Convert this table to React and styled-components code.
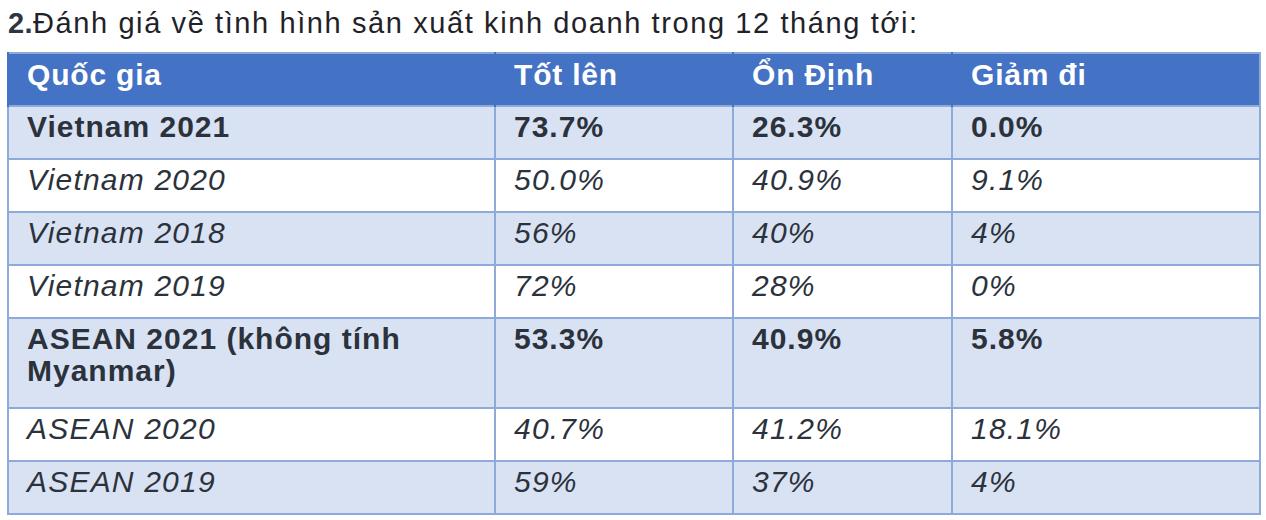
import styled, { createGlobalStyle } from "styled-components";

const GlobalStyle = createGlobalStyle`
    body {
        margin: 0;
        background: #ffffff;
        font-family: "Liberation Sans", Arial, sans-serif;
    }
`;

const Page = styled.div`
    padding: 5px 7px 0 7px;
    width: 1252px;
`;

const Title = styled.h2`
    margin: 0 0 10px 1px;
    font-size: 29px;
    font-weight: 400;
    line-height: 37px;
    letter-spacing: 1.6px;
    color: #1f2329;

    b {
        font-weight: 700;
        color: #2f3640;
        letter-spacing: 0.4px;
    }
`;

const Table = styled.table`
    width: 1252px;
    border-collapse: collapse;
    table-layout: fixed;
    border: 2px solid #8eaadb;
`;

const HeadCell = styled.th`
    background: #4472c4;
    color: #ffffff;
    text-align: left;
    vertical-align: top;
    font-size: 30px;
    font-weight: 700;
    line-height: 32px;
    letter-spacing: 0.8px;
    padding: 5px 18px 0 18px;
    height: 53px;
    box-sizing: border-box;
    border-left: 2px solid #4472c4;
`;

const Row = styled.tr`
    height: ${(p) => (p.$tall ? 90 : 53)}px;
    background: ${(p) => (p.$shade ? "#d9e2f3" : "#ffffff")};
`;

const Cell = styled.td`
    vertical-align: top;
    padding: 4px 18px 0 18px;
    font-size: 30px;
    line-height: 32px;
    letter-spacing: ${(p) => (p.$strong ? 1 : 1.2)}px;
    font-weight: ${(p) => (p.$strong ? 700 : 400)};
    font-style: ${(p) => (p.$strong ? "normal" : "italic")};
    color: #2b323c;
    border: 2px solid #8eaadb;
`;

const columns = [
    { label: "Quốc gia", width: 487 },
    { label: "Tốt lên", width: 238 },
    { label: "Ổn Định", width: 219 },
    { label: "Giảm đi", width: 308 },
];

const rows = [
    { name: "Vietnam 2021", values: ["73.7%", "26.3%", "0.0%"], strong: true },
    { name: "Vietnam 2020", values: ["50.0%", "40.9%", "9.1%"] },
    { name: "Vietnam 2018", values: ["56%", "40%", "4%"] },
    { name: "Vietnam 2019", values: ["72%", "28%", "0%"] },
    { name: "ASEAN 2021 (không tính Myanmar)", values: ["53.3%", "40.9%", "5.8%"], strong: true, tall: true },
    { name: "ASEAN 2020", values: ["40.7%", "41.2%", "18.1%"] },
    { name: "ASEAN 2019", values: ["59%", "37%", "4%"] },
];

export default function App() {
    return (
        <>
            <GlobalStyle />
            <Page>
                <Title>
                    <b>2.</b>Đánh giá về tình hình sản xuất kinh doanh trong 12 tháng tới:
                </Title>
                <Table>
                    <colgroup>
                        {columns.map((c) => (
                            <col key={c.label} style={{ width: c.width }} />
                        ))}
                    </colgroup>
                    <thead>
                        <tr>
                            {columns.map((c) => (
                                <HeadCell key={c.label}>{c.label}</HeadCell>
                            ))}
                        </tr>
                    </thead>
                    <tbody>
                        {rows.map((r, i) => (
                            <Row key={r.name} $shade={i % 2 === 0} $tall={r.tall}>
                                <Cell $strong={r.strong}>{r.name}</Cell>
                                {r.values.map((v, j) => (
                                    <Cell key={j} $strong={r.strong}>{v}</Cell>
                                ))}
                            </Row>
                        ))}
                    </tbody>
                </Table>
            </Page>
        </>
    );
}
